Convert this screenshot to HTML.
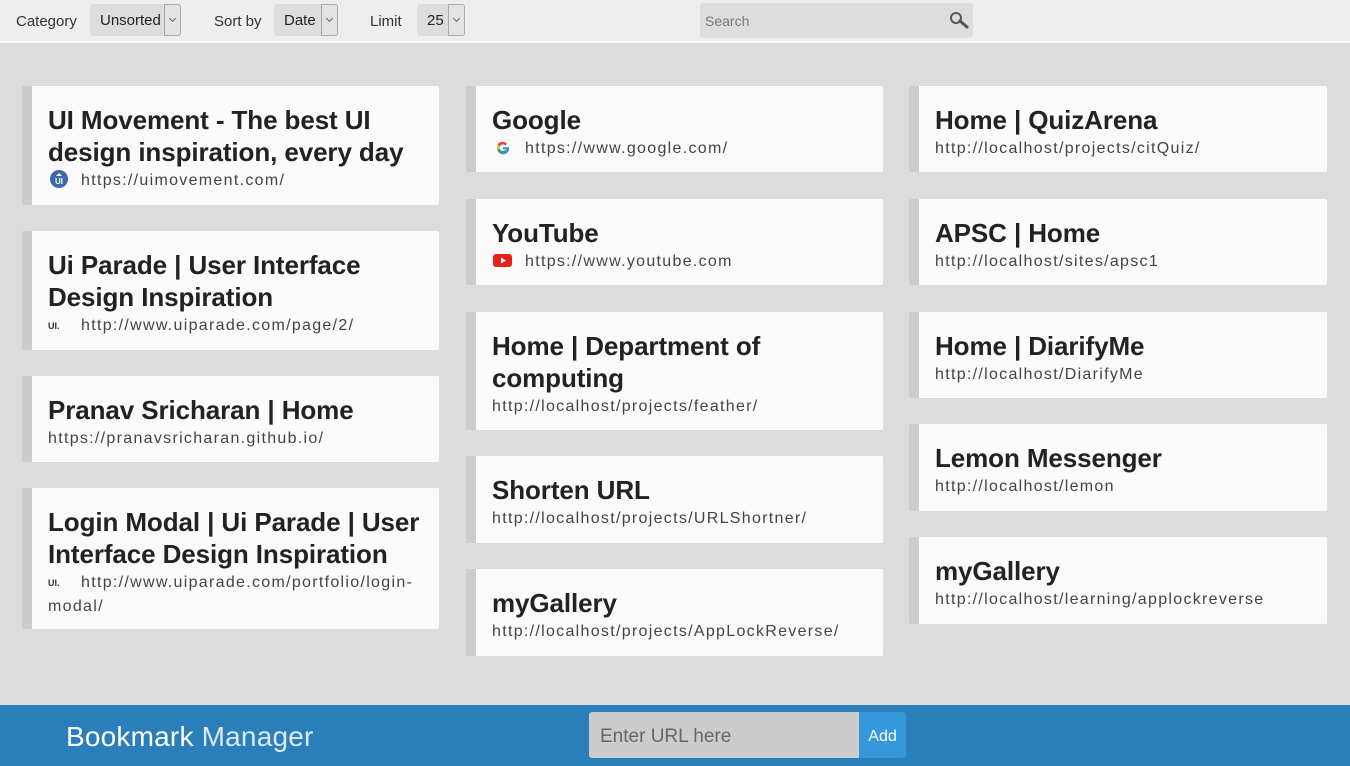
<!DOCTYPE html>
<html><head><meta charset="utf-8"><style>
*{box-sizing:border-box;margin:0;padding:0}
body{width:1350px;height:766px;overflow:hidden;background:#dcdcdc;font-family:"Liberation Sans",sans-serif;position:relative}
.top{position:absolute;left:0;top:0;width:1350px;height:43px;background:#eee;border-bottom:2px solid #f7f7f7;font-size:15px;color:#333}
.lbl{position:absolute;top:12px}
.sel{position:absolute;top:4px;height:32px;background:#ddd;border-radius:3px;font-size:15px;color:#222;line-height:34px;padding-left:10px}
.sel i{position:absolute;right:0;top:0;width:17px;height:32px;border:1px solid #aaa;border-radius:0 3px 3px 0;background:#e3e3e3}
.sel i:after{content:"";position:absolute;left:5px;top:11px;width:4px;height:4px;border-right:1px solid #666;border-bottom:1px solid #666;transform:rotate(45deg)}
.search{position:absolute;left:700px;top:3px;width:273px;height:35px;background:#ddd;border-radius:3px;color:#777;font-size:14px;line-height:36px;padding-left:5px}
.card{position:absolute;background:#fafafa;border-left:10px solid #ccc;border-radius:2px;padding:18px 16px 14px 16px;width:417px}
.card h2{font-size:26px;line-height:32px;font-weight:bold;color:#222;white-space:nowrap;letter-spacing:-0.1px}
.card p{font-size:16px;line-height:23px;color:#444;white-space:nowrap;letter-spacing:1.3px;margin-top:1px}
.ic{display:inline-block;width:22px;height:18px;vertical-align:-3px;margin-right:11px}
.foot{position:absolute;left:0;top:705px;width:1350px;height:61px;background:#2a7fba}
.brand{position:absolute;left:66px;top:16px;font-size:28px;color:#fff;letter-spacing:0.2px}
.brand span{font-weight:300;color:#dbe9f4}
.inp{position:absolute;left:589px;top:7px;width:270px;height:46px;background:#ccc;border-radius:3px 0 0 3px;color:#666;font-size:19px;line-height:50px;padding-left:11px}
.add{position:absolute;left:859px;top:7px;width:47px;height:46px;background:#3498db;border-radius:0 3px 3px 0;color:#fff;font-size:16px;line-height:50px;text-align:center}
</style></head><body>
<div class="top">
<div class="lbl" style="left:16px;top:13px">Category</div>
<div class="sel" style="left:90px;width:91px">Unsorted<i></i></div>
<div class="lbl" style="left:214px;top:13px">Sort by</div>
<div class="sel" style="left:274px;width:64px">Date<i></i></div>
<div class="lbl" style="left:370px;top:13px">Limit</div>
<div class="sel" style="left:417px;width:48px">25<i></i></div>
<div class="search">Search
<svg style="position:absolute;right:3px;top:8px" width="22" height="18" viewBox="0 0 22 18"><circle cx="8" cy="7" r="5" fill="none" stroke="#555" stroke-width="2"/><path d="M12 10l7 6" stroke="#555" stroke-width="3" stroke-linecap="round"/></svg></div>
</div>

<div class="card" style="left:22px;top:86px;height:119px"><h2>UI Movement - The best UI<br>design inspiration, every day</h2><p><svg class="ic" viewBox="0 0 22 18"><circle cx="11" cy="9" r="9" fill="#3d6aa8"/><text x="11" y="14" font-size="8" fill="#fff" text-anchor="middle" font-family="Liberation Sans" font-weight="bold" letter-spacing="0">UI</text><path d="M8 6l3-3 3 3z" fill="#fff"/></svg>https://uimovement.com/</p></div>
<div class="card" style="left:22px;top:231px;height:119px"><h2>Ui Parade | User Interface<br>Design Inspiration</h2><p><span class="ic" style="font-size:9px;font-weight:bold;color:#333;vertical-align:1px;height:auto;width:22px;letter-spacing:0">UI.</span>http://www.uiparade.com/page/2/</p></div>
<div class="card" style="left:22px;top:376px;height:86px"><h2>Pranav Sricharan | Home</h2><p>https://pranavsricharan.github.io/</p></div>
<div class="card" style="left:22px;top:488px;height:141px"><h2>Login Modal | Ui Parade | User<br>Interface Design Inspiration</h2><p><span class="ic" style="font-size:9px;font-weight:bold;color:#333;vertical-align:1px;height:auto;width:22px;letter-spacing:0">UI.</span>http://www.uiparade.com/portfolio/login-<br>modal/</p></div>

<div class="card" style="left:466px;top:86px;height:86px"><h2>Google</h2><p><svg class="ic" viewBox="0 0 22 18"><path d="M17 9.2h-6v2.2h3.4a3.6 3.6 0 1 1-1-4l1.6-1.6A6 6 0 1 0 17 9.2z" fill="#4285f4"/><path d="M5.6 6.3l1.9 1.4A3.6 3.6 0 0 1 13.4 7.4l1.6-1.6A6 6 0 0 0 5.6 6.3z" fill="#ea4335"/><path d="M5.6 11.7l1.9-1.4A3.6 3.6 0 0 0 13.4 12l1.6 1.6A6 6 0 0 1 5.6 11.7z" fill="#34a853"/><path d="M5.6 6.3A6 6 0 0 0 5.6 11.7l1.9-1.4a3.6 3.6 0 0 1 0-2.6z" fill="#fbbc05"/></svg>https://www.google.com/</p></div>
<div class="card" style="left:466px;top:199px;height:86px"><h2>YouTube</h2><p><svg class="ic" viewBox="0 0 22 18"><rect x="1" y="3" width="19" height="13" rx="3" fill="#e62117"/><path d="M9 6.5v6l5-3z" fill="#fff"/></svg>https://www.youtube.com</p></div>
<div class="card" style="left:466px;top:312px;height:118px"><h2>Home | Department of<br>computing</h2><p>http://localhost/projects/feather/</p></div>
<div class="card" style="left:466px;top:456px;height:87px"><h2>Shorten URL</h2><p>http://localhost/projects/URLShortner/</p></div>
<div class="card" style="left:466px;top:569px;height:87px"><h2>myGallery</h2><p>http://localhost/projects/AppLockReverse/</p></div>

<div class="card" style="left:909px;top:86px;height:86px;width:418px"><h2>Home | QuizArena</h2><p>http://localhost/projects/citQuiz/</p></div>
<div class="card" style="left:909px;top:199px;height:86px;width:418px"><h2>APSC | Home</h2><p>http://localhost/sites/apsc1</p></div>
<div class="card" style="left:909px;top:312px;height:86px;width:418px"><h2>Home | DiarifyMe</h2><p>http://localhost/DiarifyMe</p></div>
<div class="card" style="left:909px;top:424px;height:87px;width:418px"><h2>Lemon Messenger</h2><p>http://localhost/lemon</p></div>
<div class="card" style="left:909px;top:537px;height:87px;width:418px"><h2>myGallery</h2><p>http://localhost/learning/applockreverse</p></div>

<div class="foot">
<div class="brand">Bookmark <span>Manager</span></div>
<div class="inp">Enter URL here</div>
<div class="add">Add</div>
</div>
</body></html>
